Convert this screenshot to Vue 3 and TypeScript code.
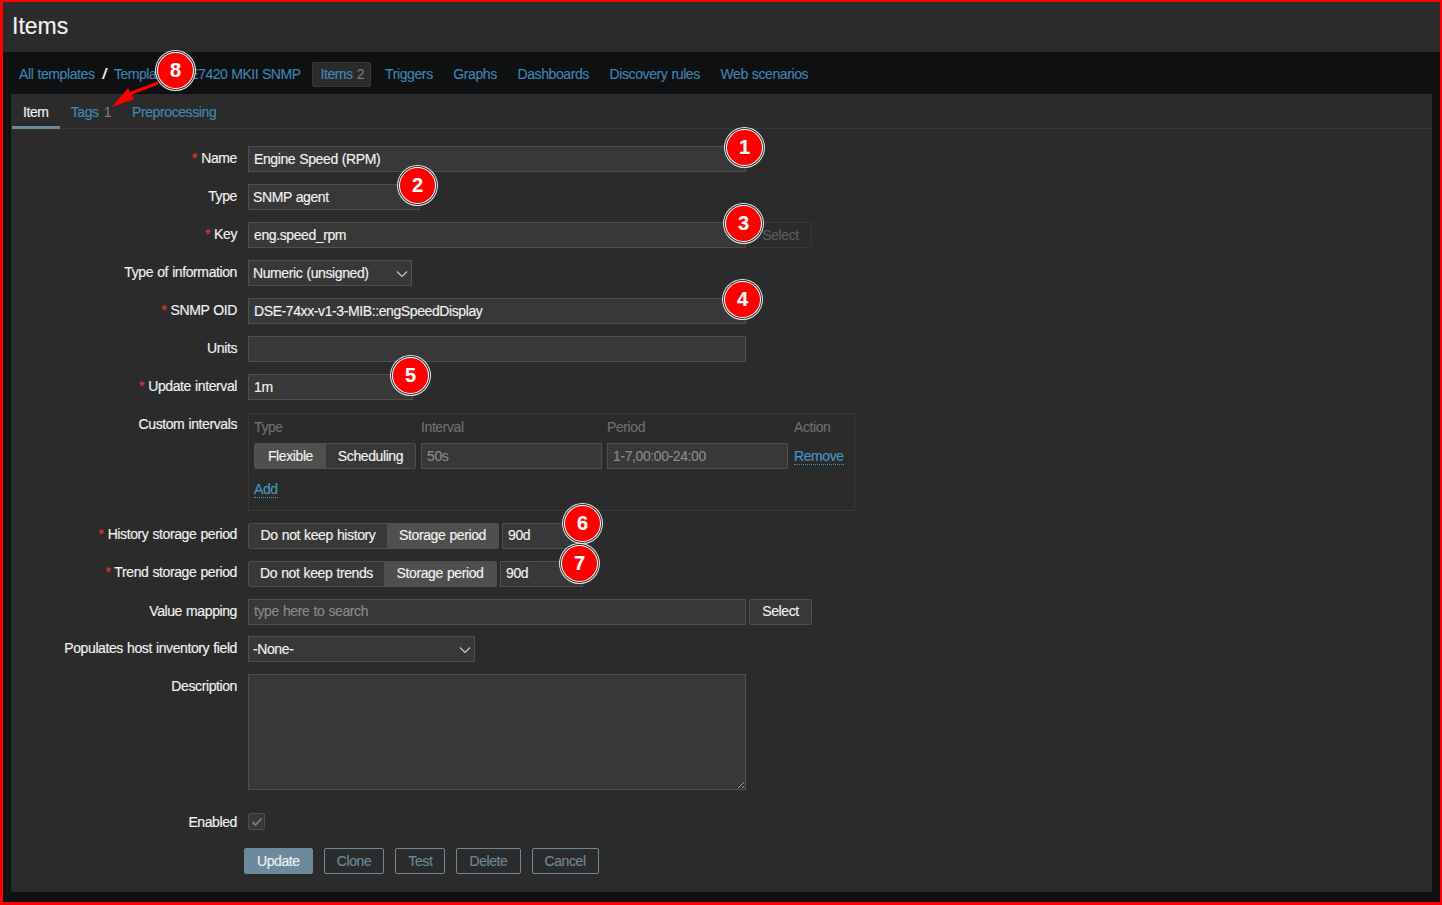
<script setup lang="ts">
const navLinks = ['Triggers', 'Graphs', 'Dashboards', 'Discovery rules', 'Web scenarios']

const markers = [
  { n: 1, x: 745, y: 147 },
  { n: 2, x: 418, y: 185 },
  { n: 3, x: 744, y: 223 },
  { n: 4, x: 743, y: 299 },
  { n: 5, x: 411, y: 375 },
  { n: 6, x: 583, y: 523 },
  { n: 7, x: 580, y: 563 },
  { n: 8, x: 176, y: 70 },
]
</script>

<template>
  <div class="page">
    <header class="title-bar"><h1>Items</h1></header>

    <nav class="crumbs">
      <a class="link">All templates</a>
      <span class="slash">/</span>
      <a class="link tpl">Template DSE7420 MKII SNMP</a>
      <span class="crumb-active"><a class="link">Items</a> <span class="count">2</span></span>
      <a v-for="item in navLinks" :key="item" class="link nav-item">{{ item }}</a>
    </nav>

    <main class="panel">
      <div class="tabs">
        <span class="tab active">Item</span>
        <span class="tab"><a class="link">Tags</a> <span class="count">1</span></span>
        <span class="tab"><a class="link">Preprocessing</a></span>
      </div>

      <form class="form" @submit.prevent>
        <label class="lbl"><i>*</i> Name</label>
        <div><input class="field w-full" value="Engine Speed (RPM)" /></div>

        <label class="lbl">Type</label>
        <div>
          <div class="select w-type">SNMP agent</div>
        </div>

        <label class="lbl"><i>*</i> Key</label>
        <div class="line">
          <input class="field w-full" value="eng.speed_rpm" />
          <button class="btn-plain disabled" type="button">Select</button>
        </div>

        <label class="lbl">Type of information</label>
        <div>
          <div class="select w-info">
            Numeric (unsigned)
            <svg class="chev" width="12" height="8" viewBox="0 0 12 8"><path d="M1 1.5 6 6.5 11 1.5" fill="none" stroke="#c8c8c8" stroke-width="1.2" /></svg>
          </div>
        </div>

        <label class="lbl"><i>*</i> SNMP OID</label>
        <div><input class="field w-full" value="DSE-74xx-v1-3-MIB::engSpeedDisplay" /></div>

        <label class="lbl">Units</label>
        <div><input class="field w-full" value="" /></div>

        <label class="lbl"><i>*</i> Update interval</label>
        <div><input class="field w-update" value="1m" /></div>

        <label class="lbl">Custom intervals</label>
        <div class="intervals">
          <div class="int-head int-type">Type</div>
          <div class="int-head int-val">Interval</div>
          <div class="int-head int-per">Period</div>
          <div class="int-head act">Action</div>
          <div class="seg int-type">
            <span class="on s-flex">Flexible</span>
            <span class="s-sched">Scheduling</span>
          </div>
          <input class="field int-val muted" value="50s" />
          <input class="field int-per muted" value="1-7,00:00-24:00" />
          <a class="link dotted act remove">Remove</a>
          <a class="link dotted add">Add</a>
        </div>

        <label class="lbl lift-lbl"><i>*</i> History storage period</label>
        <div class="line lift">
          <div class="seg">
            <span class="s-hist">Do not keep history</span>
            <span class="on s-store">Storage period</span>
          </div>
          <input class="field w-days" value="90d" />
        </div>

        <label class="lbl lift-lbl"><i>*</i> Trend storage period</label>
        <div class="line lift">
          <div class="seg">
            <span class="s-trend">Do not keep trends</span>
            <span class="on s-store2">Storage period</span>
          </div>
          <input class="field w-days2" value="90d" />
        </div>

        <label class="lbl">Value mapping</label>
        <div class="line lift">
          <input class="field w-full" placeholder="type here to search" />
          <button class="btn-plain" type="button">Select</button>
        </div>

        <label class="lbl up">Populates host inventory field</label>
        <div class="up">
          <div class="select w-inv">
            -None-
            <svg class="chev" width="12" height="8" viewBox="0 0 12 8"><path d="M1 1.5 6 6.5 11 1.5" fill="none" stroke="#c8c8c8" stroke-width="1.2" /></svg>
          </div>
        </div>

        <label class="lbl">Description</label>
        <div><textarea class="field area"></textarea></div>

        <label class="lbl enabled-lbl">Enabled</label>
        <div class="enabled">
          <span class="check">
            <svg width="12" height="10" viewBox="0 0 12 10"><path d="M1.5 5 4.5 8 10.5 1.5" fill="none" stroke="#7a7f83" stroke-width="1.8" /></svg>
          </span>
        </div>

        <div></div>
        <div class="actions">
          <button class="btn primary" type="button">Update</button>
          <button class="btn" type="button">Clone</button>
          <button class="btn" type="button">Test</button>
          <button class="btn" type="button">Delete</button>
          <button class="btn" type="button">Cancel</button>
        </div>
      </form>
    </main>

    <svg class="arrow" width="60" height="40" viewBox="105 75 60 40">
      <path d="M158 83 129 94" stroke="#f00" stroke-width="3" fill="none" />
      <path d="M112 107 128 88 134 99Z" fill="#f00" />
    </svg>
    <div
      v-for="m in markers"
      :key="m.n"
      class="marker"
      :style="{ left: m.x - 18 + 'px', top: m.y - 17.5 + 'px' }"
    >{{ m.n }}</div>
  </div>
</template>

<style scoped>
.page {
  position: relative;
  box-sizing: border-box;
  width: 1442px;
  height: 905px;
  display: flex;
  flex-direction: column;
  border-style: solid;
  border-color: #f00;
  border-width: 2px 2px 3px 3px;
  background: #0e1012;
  color: #f2f2f2;
  font: 14px "Liberation Sans", Arial, sans-serif;
  letter-spacing: -0.4px;
  word-spacing: 0.6px;
  -webkit-text-stroke: 0.15px;
  overflow: hidden;
}
.title-bar {
  height: 50px;
  flex: none;
  display: flex;
  align-items: center;
  padding-left: 9px;
  background: #2b2b2b;
}
h1 {
  margin: 0 0 2px;
  font-size: 23px;
  font-weight: 400;
  letter-spacing: 0;
  color: #f2f2f2;
}
.crumbs {
  height: 42px;
  flex: none;
  display: flex;
  align-items: center;
  padding: 3px 0 0 16px;
  box-sizing: border-box;
  white-space: nowrap;
}
.crumbs .link,
.crumbs .count {
  margin-top: -2px;
}
.link {
  color: #4796c4;
  opacity: 0.88;
}
.tpl {
  letter-spacing: -0.5px;
}
.slash {
  margin: -2px 8px 0;
  font-weight: 700;
  font-style: italic;
}
.crumb-active {
  height: 25px;
  box-sizing: border-box;
  display: flex;
  align-items: center;
  gap: 4px;
  margin: 0 14px 0 12px;
  padding: 0 6px 0 7px;
  background: #2b2b2b;
  border: 1px solid #383838;
  border-radius: 2px;
}
.count {
  color: #7a7a7a;
}
.nav-item {
  margin-right: 20.6px;
}
.panel {
  flex: 1;
  margin: 0 8px 10px;
  background: #2b2b2b;
  min-height: 0;
}
.tabs {
  height: 35px;
  box-sizing: border-box;
  display: flex;
  border-bottom: 1px solid #383838;
  padding-left: 1px;
}
.tab {
  height: 35px;
  box-sizing: border-box;
  padding: 10px 11px 0;
  display: flex;
  gap: 5px;
  white-space: nowrap;
}
.tab + .tab + .tab {
  margin-left: -1px;
}
.tab.active {
  border-bottom: 3px solid #6d8a9c;
  color: #f2f2f2;
}
.form {
  display: grid;
  grid-template-columns: 226px 1fr;
  column-gap: 11px;
  row-gap: 12px;
  padding-top: 17px;
}
.lbl {
  text-align: right;
  padding-top: 4px;
  line-height: 16px;
  white-space: nowrap;
}
.lbl i {
  font-style: normal;
  color: #e33734;
}
.lift-lbl {
  padding-top: 3px;
}
.up {
  margin-top: -1px;
}
.line {
  display: flex;
  align-items: flex-start;
  gap: 3px;
}
.field {
  display: block;
  box-sizing: border-box;
  height: 26px;
  padding: 0 5px;
  margin: 0;
  background: #383838;
  border: 1px solid #4f4f4f;
  color: #f2f2f2;
  font: inherit;
  letter-spacing: inherit;
  word-spacing: inherit;
  outline: none;
}
.field::placeholder {
  color: #8a8a8a;
}
.field.muted {
  color: #8a8a8a;
}
.lift .field,
.lift .btn-plain {
  padding-bottom: 2px;
}
.lift .seg span {
  line-height: 22px;
}
.w-full {
  width: 498px;
}
.w-update {
  width: 165px;
}
.w-days {
  width: 83px;
}
.w-days2 {
  width: 83px;
}
.select {
  box-sizing: border-box;
  position: relative;
  height: 26px;
  padding: 0 4px;
  line-height: 25px;
  background: #383838;
  border: 1px solid #4f4f4f;
  white-space: nowrap;
}
.w-type {
  width: 172px;
}
.w-info {
  width: 164px;
}
.w-inv {
  width: 227px;
}
.chev {
  position: absolute;
  right: 3px;
  top: 9px;
}
.btn-plain {
  box-sizing: border-box;
  width: 63px;
  height: 26px;
  padding: 0;
  background: #383838;
  border: 1px solid #4f4f4f;
  border-radius: 2px;
  color: #f2f2f2;
  font: inherit;
  letter-spacing: inherit;
}
.btn-plain.disabled {
  background: #2b2b2b;
  border-color: #383838;
  color: #5c5c5c;
}
.intervals {
  box-sizing: border-box;
  width: 607px;
  height: 98px;
  margin-top: 1px;
  border: 1px solid #383838;
  display: grid;
  grid-template-columns: 162px 181px 181px auto;
  column-gap: 5px;
  grid-template-rows: 16px 26px auto;
  row-gap: 8px;
  padding: 5px 5px 0;
}
.int-head {
  color: #6f6f6f;
  line-height: 16px;
}
.act {
  margin-left: 1px;
}
.remove {
  margin-top: 2px;
}
.int-val,
.int-per {
  width: 100%;
}
.seg {
  display: flex;
  height: 26px;
  box-sizing: border-box;
  border: 1px solid #4f4f4f;
  border-radius: 2px;
  background: #383838;
  white-space: nowrap;
}
.seg span {
  display: block;
  box-sizing: border-box;
  text-align: center;
  line-height: 24px;
}
.seg .on {
  background: #4f4f4f;
}
.s-flex {
  width: 71px;
}
.s-sched {
  width: 89px;
}
.s-hist {
  width: 138px;
}
.s-store {
  width: 111px;
}
.s-trend {
  width: 135px;
}
.s-store2 {
  width: 112px;
}
.dotted {
  border-bottom: 1px dotted #4796c4;
  opacity: 1;
  line-height: 15px;
  justify-self: start;
  align-self: center;
}
.add {
  grid-column: 1;
  margin-top: 5px;
  align-self: start;
}
.area {
  width: 498px;
  height: 116px;
  resize: both;
}
.enabled-lbl {
  padding-top: 12px;
}
.enabled {
  padding-top: 11px;
}
.check {
  display: flex;
  align-items: center;
  justify-content: center;
  box-sizing: border-box;
  width: 17px;
  height: 17px;
  background: #383838;
  border: 1px solid #4f4f4f;
  border-radius: 2px;
}
.actions {
  display: flex;
  gap: 11px;
  margin-left: -4px;
  margin-top: 6px;
}
.btn {
  box-sizing: border-box;
  height: 26px;
  padding: 0 12px;
  background: transparent;
  border: 1px solid #6d8a9c;
  border-radius: 2px;
  color: #6d8a9c;
  font: inherit;
  letter-spacing: inherit;
}
.btn.primary {
  background: #6d8a9c;
  color: #f2f2f2;
}
.marker {
  position: absolute;
  margin: -2px 0 0 -3px;
  box-sizing: border-box;
  width: 35px;
  height: 35px;
  border-radius: 50%;
  background: #f00;
  box-shadow: 0 0 0 1px #fff, 0 0 0 2px #333, 0 0 0 3px #e8e8e8;
  color: #fff;
  font-size: 20px;
  font-weight: 700;
  letter-spacing: 0;
  line-height: 35px;
  text-align: center;
}
.arrow {
  position: absolute;
  left: 102px;
  top: 73px;
}
</style>

<style>
html,
body {
  background: #0e1012;
}
</style>
